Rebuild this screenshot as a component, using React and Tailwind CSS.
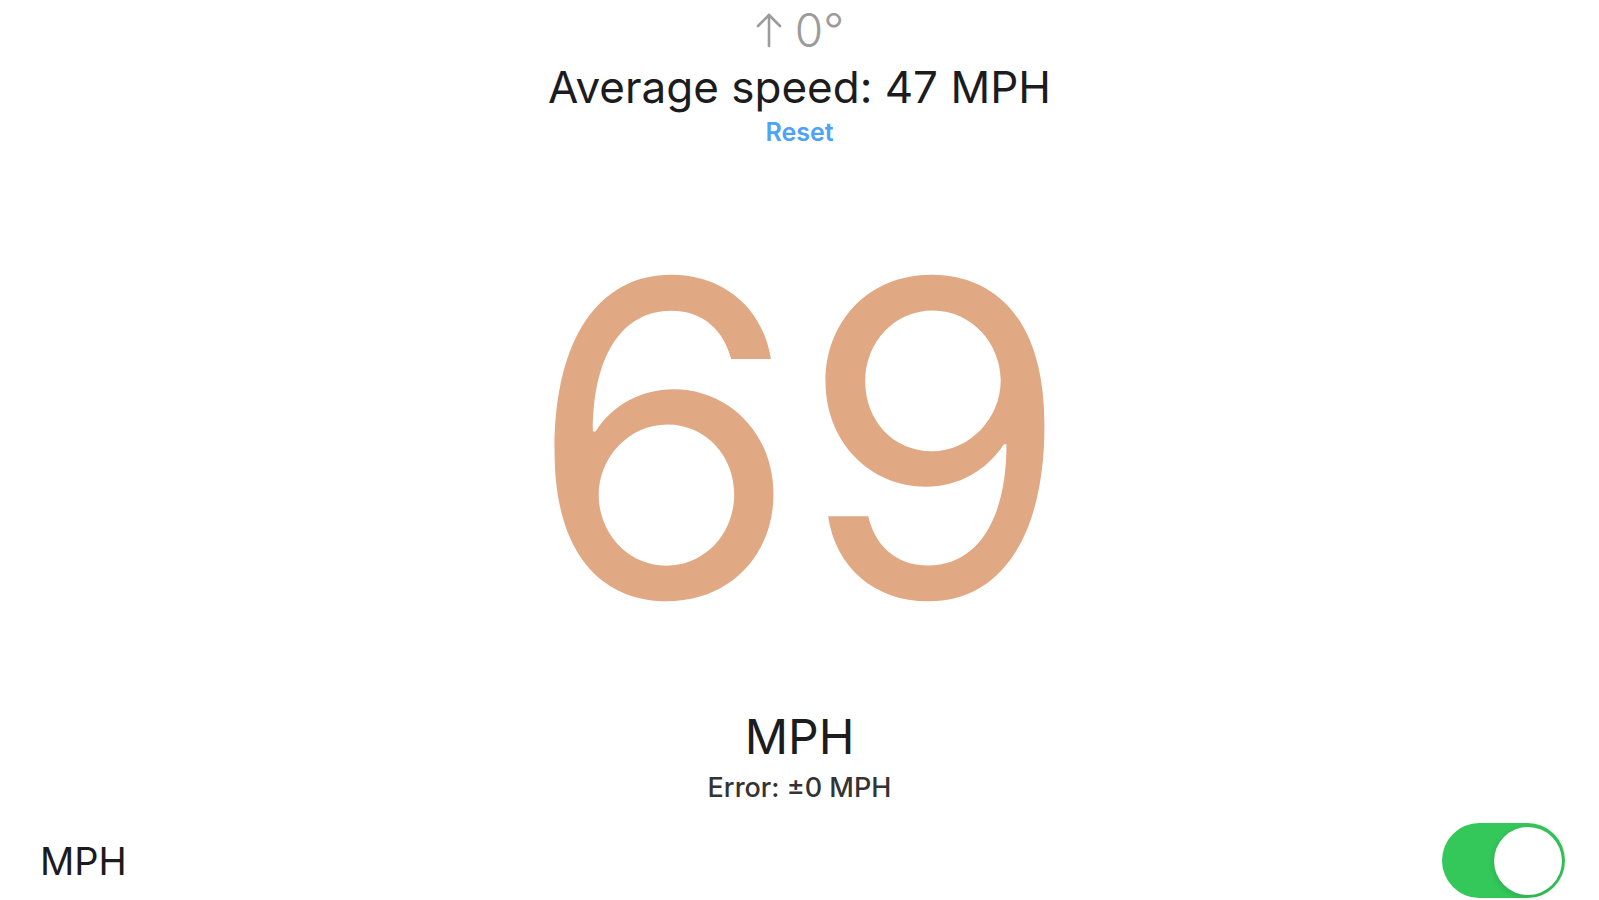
export default function App() {
  return (
    <div className="w-[1599px] h-[900px] bg-white overflow-hidden flex flex-col items-center font-['Inter',sans-serif]">
      <div className="mt-[7px] flex items-center gap-[12px] text-[46px] leading-none text-[#9b9b9b] font-light">
        <svg width="28" height="36" viewBox="0 0 28 36" fill="none" stroke="#9b9b9b" strokeWidth="2.6" strokeLinecap="round" strokeLinejoin="round">
          <path d="M14 34V3" />
          <path d="M3 14L14 3L25 14" />
        </svg>
        <span>0°</span>
      </div>
      <div className="mt-[12px] text-[44px] leading-none text-[#1c1c1e]">Average speed: 47 MPH</div>
      <div className="mt-[11px] text-[25px] leading-none font-semibold text-[#4ea2f7]">Reset</div>
      <div className="mt-[75px] text-[437px] leading-none text-[#e0a883]">69</div>
      <div className="mt-[56px] text-[48px] leading-none text-[#1c1c1e]">MPH</div>
      <div className="mt-[13px] text-[27px] leading-none font-medium text-[#333]">Error: ±0 MPH</div>
      <div className="mt-[22px] w-full flex items-center justify-between pl-[40px] pr-[34px]">
        <span className="text-[38px] leading-none text-[#1c1c1e]">MPH</span>
        <div className="w-[123px] h-[75px] rounded-full bg-[#34c759] p-[3.5px] flex justify-end">
          <div className="w-[68px] h-[68px] rounded-full bg-white shadow-[0_2px_6px_rgba(0,0,0,0.15)]" />
        </div>
      </div>
    </div>
  );
}
